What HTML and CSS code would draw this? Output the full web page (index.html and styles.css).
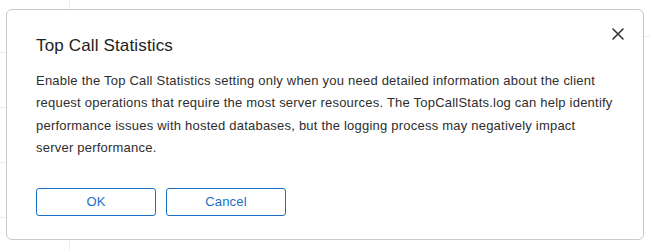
FILE: index.html
```html
<!DOCTYPE html>
<html lang="en">
<head>
<meta charset="utf-8">
<title>Top Call Statistics</title>
<link rel="stylesheet" href="styles.css">
</head>
<body>
<div class="dialog" role="dialog" aria-labelledby="dlg-title">
  <button class="close" aria-label="Close">
    <svg width="12" height="12" viewBox="0 0 12 12"><path d="M1 1L11 11M11 1L1 11" stroke="#333" stroke-width="1.6" stroke-linecap="round"/></svg>
  </button>
  <h2 class="title" id="dlg-title">Top Call Statistics</h2>
  <p class="text">Enable the Top Call Statistics setting only when you need detailed information about the client request operations that require the most server resources. The TopCallStats.log can help identify performance issues with hosted databases, but the logging process may negatively impact server performance.</p>
  <div class="actions">
    <button class="btn">OK</button>
    <button class="btn">Cancel</button>
  </div>
</div>
</body>
</html>
```

FILE: styles.css
```css
html {
  background-color: #fff;
  background-image:
    linear-gradient(#ececec, #ececec),
    repeating-linear-gradient(to bottom, transparent 0 52px, #ececec 52px 53px, transparent 53px 55px),
    linear-gradient(#ececec, #ececec);
  background-repeat: no-repeat;
  background-position: 69px 0, 0 0, right 0 top 36px;
  background-size: 1px 100%, 6px 100%, 6px 1px;
  height: 100%;
}
body {
  margin: 0;
  padding: 9px 6px 0 6px;
  font-family: "Liberation Sans", Arial, Helvetica, sans-serif;
  color: #2b2b2b;
}
.dialog {
  position: relative;
  box-sizing: border-box;
  width: 638px;
  height: 231px;
  background: #fff;
  border: 1px solid #c9c9c9;
  border-radius: 6px;
  padding: 24px 30px 23px 29px;
}
.close {
  position: absolute;
  top: 18px;
  right: 19px;
  width: 12px;
  height: 12px;
  padding: 0;
  border: 0;
  background: none;
  display: flex;
}
.title {
  margin: 0;
  font-size: 17px;
  line-height: 24px;
  font-weight: normal;
  letter-spacing: 0.15px;
  color: #222;
}
.text {
  margin: 12px 0 0 0;
  font-size: 13px;
  line-height: 22.4px;
  letter-spacing: 0.22px;
  color: #2e2e2e;
}
.actions {
  display: flex;
  gap: 10px;
  margin-top: 28px;
}
.btn {
  box-sizing: border-box;
  width: 120px;
  height: 28px;
  border: 1px solid #1a6fc4;
  border-radius: 3px;
  background: #fff;
  color: #1a6fc4;
  font-family: "Liberation Sans", Arial, Helvetica, sans-serif;
  font-size: 13px;
  letter-spacing: 0.2px;
  padding: 0;
}
```
